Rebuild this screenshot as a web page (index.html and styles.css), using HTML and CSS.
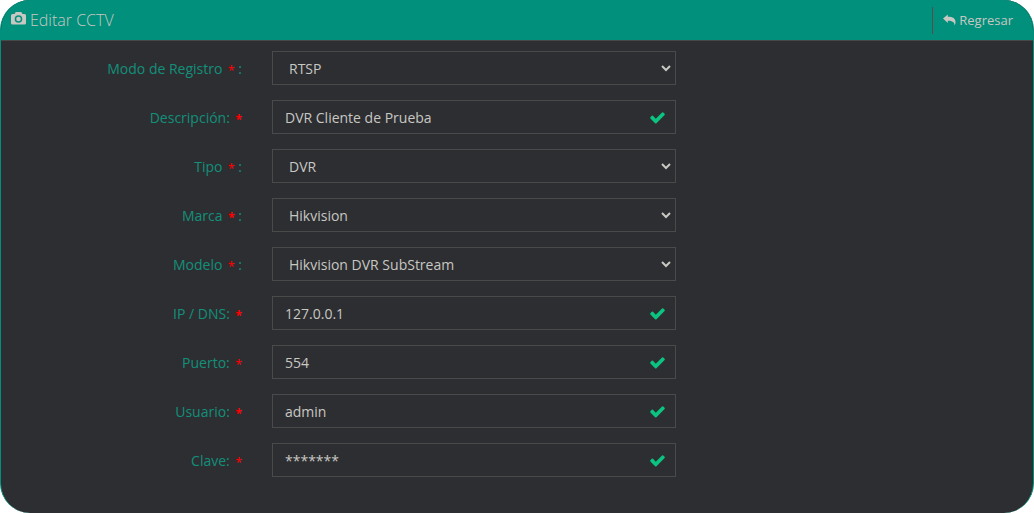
FILE: index.html
```html
<!DOCTYPE html>
<html lang="es">
<head>
  <meta charset="UTF-8" />
  <meta name="viewport" content="width=device-width, initial-scale=1.0" />
  <title>Editar CCTV</title>
  <link rel="stylesheet" href="styles.css">
</head>
<body>
  <svg class="sprite" aria-hidden="true">
    <symbol id="check" viewBox="0 0 1792 1792">
      <path d="M1671 566q0 40-28 68l-724 724-136 136q-28 28-68 28t-68-28l-136-136-362-362q-28-28-28-68t28-68l136-136q28-28 68-28t68 28l294 295 656-657q28-28 68-28t68 28l136 136q28 28 28 68z"/>
    </symbol>
  </svg>

  <div class="panel">
    <header class="panel-heading">
      <h1>
        <svg class="camera" viewBox="0 0 15 13" aria-hidden="true">
          <path fill-rule="evenodd" d="M4.700 0h5.600l1.200 2H13.500a1.500 1.500 0 0 1 1.500 1.500v7.500a1.500 1.500 0 0 1-1.500 1.500h-12A1.500 1.500 0 0 1 0 11V3.500A1.500 1.500 0 0 1 1.500 2h2zM7.500 3.200a3.800 3.800 0 1 0 0 7.600 3.800 3.800 0 0 0 0-7.600zm0 1.500a2.300 2.300 0 1 1 0 4.600 2.300 2.300 0 0 1 0-4.600z"/>
        </svg>
        Editar CCTV
      </h1>
      <a class="back" href="#">
        <svg viewBox="0 0 14 12" aria-hidden="true">
          <path d="M0 4.500 5.200 0v2.600c5.600 0 8.300 2 8.300 5.800 0 1.300-.4 2.500-1 3.600.1-3.700-2.300-5.300-7.300-5.300V9.200z"/>
        </svg>
        Regresar
      </a>
    </header>

    <form class="panel-body">
      <div class="row">
        <label for="modo">Modo de Registro <span class="req">*</span> :</label>
        <div class="field"><select id="modo"><option>RTSP</option></select><svg class="arrow" viewBox="0 0 10 7" aria-hidden="true"><path d="M1 1l4 4 4-4"/></svg></div>
      </div>
      <div class="row">
        <label for="descripcion">Descripción: <b class="req">*</b></label>
        <div class="field"><input type="text" id="descripcion" value="DVR Cliente de Prueba" /><svg class="ok" aria-hidden="true"><use href="#check"/></svg></div>
      </div>
      <div class="row">
        <label for="tipo">Tipo <span class="req">*</span> :</label>
        <div class="field"><select id="tipo"><option>DVR</option></select><svg class="arrow" viewBox="0 0 10 7" aria-hidden="true"><path d="M1 1l4 4 4-4"/></svg></div>
      </div>
      <div class="row">
        <label for="marca">Marca <b class="req">*</b> :</label>
        <div class="field"><select id="marca"><option>Hikvision</option></select><svg class="arrow" viewBox="0 0 10 7" aria-hidden="true"><path d="M1 1l4 4 4-4"/></svg></div>
      </div>
      <div class="row">
        <label for="modelo">Modelo <span class="req">*</span> :</label>
        <div class="field"><select id="modelo"><option>Hikvision DVR SubStream</option></select><svg class="arrow" viewBox="0 0 10 7" aria-hidden="true"><path d="M1 1l4 4 4-4"/></svg></div>
      </div>
      <div class="row">
        <label for="ip">IP / DNS: <b class="req">*</b></label>
        <div class="field"><input type="text" id="ip" value="127.0.0.1" /><svg class="ok" aria-hidden="true"><use href="#check"/></svg></div>
      </div>
      <div class="row">
        <label for="puerto">Puerto: <span class="req">*</span></label>
        <div class="field"><input type="text" id="puerto" value="554" /><svg class="ok" aria-hidden="true"><use href="#check"/></svg></div>
      </div>
      <div class="row">
        <label for="usuario">Usuario: <b class="req">*</b></label>
        <div class="field"><input type="text" id="usuario" value="admin" /><svg class="ok" aria-hidden="true"><use href="#check"/></svg></div>
      </div>
      <div class="row">
        <label for="clave">Clave: <span class="req">*</span></label>
        <div class="field"><input type="text" id="clave" value="*******" /><svg class="ok" aria-hidden="true"><use href="#check"/></svg></div>
      </div>
    </form>
  </div>
</body>
</html>
```

FILE: styles.css
```css
* {
  box-sizing: border-box;
}
body {
  margin: 0;
  background-color: #fff;
  font-family: "Open Sans", "Noto Sans", sans-serif;
  font-size: 14px;
  line-height: 20px;
  color: #c8c7c2;
}
.sprite {
  display: none;
}
.panel {
  display: flex;
  flex-direction: column;
  min-height: 100vh;
  overflow: hidden;
  border: 1px solid #00907c;
  border-width: 0 1px;
  border-radius: 30px;
  background-color: #2d2e32;
}
.panel-heading {
  display: flex;
  justify-content: space-between;
  align-items: center;
  height: 41px;
  padding: 0 20px 0 10px;
  border-bottom: 1px solid #484848;
  background-color: #00907c;
}
h1 {
  display: flex;
  align-items: center;
  gap: 4px;
  margin: 0;
  font-size: 16px;
  font-weight: 300;
}
.camera {
  width: 15px;
  height: 13px;
  margin-bottom: 4px;
  fill: #c8c7c2;
}
.back {
  display: flex;
  align-items: center;
  gap: 3px;
  height: 27px;
  padding-left: 10px;
  border-left: 1px solid #5a4a4c;
  font-size: 13px;
  color: #c8c7c2;
  text-decoration: none;
}
.back svg {
  width: 13px;
  height: 12px;
  fill: #c8c7c2;
}
.panel-body {
  padding: 10px 0 20px;
}
.row {
  display: flex;
  margin: 0 -4px 15px;
}
label {
  width: 25%;
  padding: 8px 15px 0;
  color: #12907a;
  text-align: right;
}
.req {
  margin-left: 2px;
  font-family: "Noto Sans", sans-serif;
  font-size: 12px;
  line-height: 1;
  vertical-align: -1px;
  color: #f00;
}
.field {
  position: relative;
  width: 41.6667%;
  padding: 0 14px 0 15px;
}
input, select {
  display: block;
  width: 100%;
  height: 34px;
  padding: 6px 12px;
  border: 1px solid #4a4a4a;
  border-radius: 0;
  background-color: transparent;
  font: inherit;
  color: #c8c7c2;
}
select {
  padding: 7px 16px 5px;
  appearance: none;
}
input:focus, select:focus {
  outline: none;
  border-color: #00907c;
}
.ok {
  position: absolute;
  top: 9px;
  right: 24px;
  width: 17px;
  height: 17px;
  fill: #0cc481;
}
.arrow {
  position: absolute;
  top: 14px;
  right: 19px;
  width: 10px;
  height: 7px;
  fill: none;
  stroke: #c8c7c2;
  stroke-width: 2;
  pointer-events: none;
}
```
